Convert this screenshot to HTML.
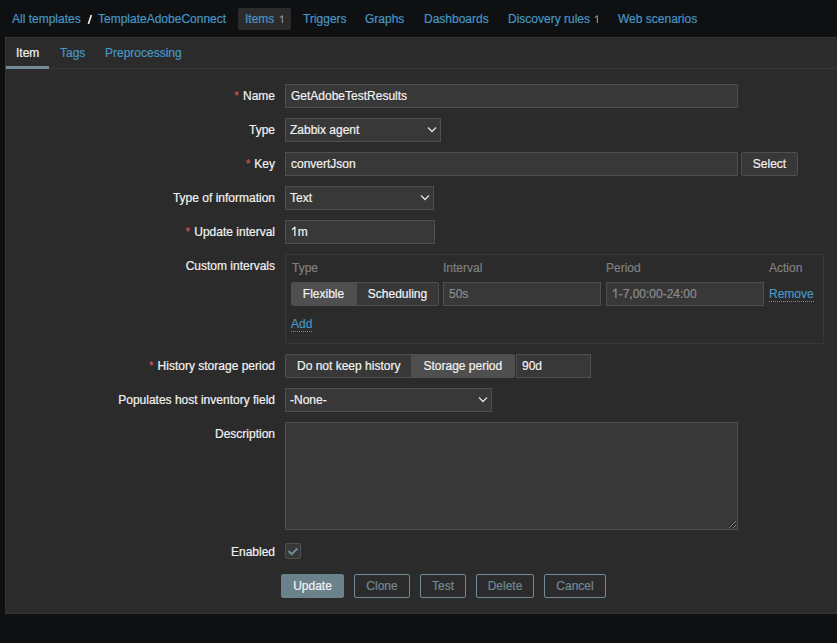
<!DOCTYPE html>
<html><head><meta charset="utf-8">
<style>
*{box-sizing:border-box;margin:0;padding:0}
html,body{width:837px;height:643px;overflow:hidden;background:#0e1012;font-family:"Liberation Sans",sans-serif;font-size:12px;color:#f2f2f2;-webkit-text-stroke:0.2px currentColor}
.a{position:absolute;white-space:nowrap;line-height:14px}
.lnk{color:#4796c4}
.one{position:absolute;left:0;top:0}
#hdr-items{position:absolute;left:238px;top:8px;width:53px;height:22px;background:#2b2b2b;border-radius:2px}
#box{position:absolute;left:5px;top:37px;width:900px;height:577px;background:#2b2b2b;border:1px solid #333}
#sep{position:absolute;left:6px;top:68px;width:900px;height:1px;background:#383838}
#uline{position:absolute;left:6px;top:66px;width:43px;height:3px;background:#768d99}
.lbl{position:absolute;text-align:right;right:562px;white-space:nowrap;line-height:14px}
.req::before{content:"*";color:#e45959;margin-right:4px;-webkit-text-stroke:0}
.inp{position:absolute;height:24px;background:#383838;border:1px solid #4f4f4f;padding:0 5px;line-height:22px;white-space:nowrap}
.sel{padding-left:4px}
.chev{position:absolute;right:3px;top:7px}
.btn{position:absolute;height:24px;border:1px solid #4f4f4f;border-radius:2px;background:#383838;text-align:center;line-height:22px}
.alt{position:absolute;top:574px;height:24px;border:1px solid #708995;border-radius:2px;color:#708995;text-align:center;line-height:22px}
.th{position:absolute;color:#808080;line-height:14px}
.ph{color:#8c8c8c}
.rad{position:absolute;height:24px;border:1px solid #4f4f4f;border-radius:2px;background:#383838;overflow:hidden}
.rad span{position:absolute;top:0;height:22px;line-height:22px;text-align:center}
.rad .on{background:#4f4f4f}
.act{border-bottom:1px dotted #4796c4}
</style></head><body>
<div class="a lnk" style="left:12px;top:12px">All templates</div>
<svg style="position:absolute;left:85px;top:12px" width="10" height="15"><path d="M3.4 11.9L6.3 3" stroke="#f2f2f2" stroke-width="1.6"/></svg>
<div class="a lnk" style="left:98px;top:12px">TemplateAdobeConnect</div>
<div id="hdr-items"></div>
<div class="a lnk" style="left:245px;top:12px">Items</div><div class="a" style="left:278.5px;top:14.5px"><svg class="one" width="5" height="9"><path d="M3.4 0.5V8M0.8 2.6Q2.6 1.6 3.4 0.5" stroke="#8c8c8c" stroke-width="1.2" fill="none"/></svg></div>
<div class="a lnk" style="left:303px;top:12px">Triggers</div>
<div class="a lnk" style="left:365px;top:12px">Graphs</div>
<div class="a lnk" style="left:424px;top:12px">Dashboards</div>
<div class="a lnk" style="left:508px;top:12px">Discovery rules</div><div class="a" style="left:593.5px;top:14.5px"><svg class="one" width="5" height="9"><path d="M3.4 0.5V8M0.8 2.6Q2.6 1.6 3.4 0.5" stroke="#8c8c8c" stroke-width="1.2" fill="none"/></svg></div>
<div class="a lnk" style="left:618px;top:12px">Web scenarios</div>

<div id="box"></div>
<div id="sep"></div>
<div id="uline"></div>
<div class="a" style="left:16px;top:46px">Item</div>
<div class="a lnk" style="left:60px;top:46px">Tags</div>
<div class="a lnk" style="left:105px;top:46px">Preprocessing</div>

<div class="lbl req" style="top:89px">Name</div>
<div class="inp" style="left:285px;top:84px;width:453px">GetAdobeTestResults</div>

<div class="lbl" style="top:123px">Type</div>
<div class="inp sel" style="left:285px;top:118px;width:156px">Zabbix agent<svg class="chev" width="10" height="7"><path d="M1 1.5L5 5.5L9 1.5" stroke="#e0e0e0" fill="none" stroke-width="1.3"/></svg></div>

<div class="lbl req" style="top:157px">Key</div>
<div class="inp" style="left:285px;top:152px;width:453px">convertJson</div>
<div class="btn" style="left:741px;top:152px;width:57px">Select</div>

<div class="lbl" style="top:191px">Type of information</div>
<div class="inp sel" style="left:285px;top:186px;width:149px">Text<svg class="chev" width="10" height="7"><path d="M1 1.5L5 5.5L9 1.5" stroke="#e0e0e0" fill="none" stroke-width="1.3"/></svg></div>

<div class="lbl req" style="top:225px">Update interval</div>
<div class="inp" style="left:285px;top:220px;width:150px"><svg width="6.67" height="10" style="vertical-align:baseline"><path d="M3.9 0.8V10M0.9 3.6Q2.9 2.6 3.9 0.8" stroke="#f2f2f2" stroke-width="1.3" fill="none"/></svg>m</div>

<div class="lbl" style="top:259px">Custom intervals</div>
<div class="a" style="left:285px;top:254px;width:539px;height:90px;border:1px solid #383838"></div>
<div class="th" style="left:292px;top:261px">Type</div>
<div class="th" style="left:443px;top:261px">Interval</div>
<div class="th" style="left:606px;top:261px">Period</div>
<div class="th" style="left:769px;top:261px">Action</div>
<div class="rad" style="left:291px;top:282px;width:148px"><span class="on" style="left:0;width:65px;padding-right:2px">Flexible</span><span style="left:65px;width:81px">Scheduling</span></div>
<div class="inp" style="left:443px;top:282px;width:158px"><span class="ph">50s</span></div>
<div class="inp" style="left:606px;top:282px;width:158px"><span class="ph"><svg width="6.67" height="10" style="vertical-align:baseline"><path d="M3.9 0.8V10M0.9 3.6Q2.9 2.6 3.9 0.8" stroke="#8c8c8c" stroke-width="1.3" fill="none"/></svg>-7,00:00-24:00</span></div>
<div class="a lnk" style="left:769px;top:287px"><span class="act">Remove</span></div>
<div class="a lnk" style="left:291px;top:317px"><span class="act">Add</span></div>

<div class="lbl req" style="top:359px">History storage period</div>
<div class="rad" style="left:285px;top:354px;width:230px"><span style="left:0;width:125px;text-align:left;padding-left:11px">Do not keep history</span><span class="on" style="left:125px;width:103px;text-align:left;padding-left:12.5px">Storage period</span></div>
<div class="inp" style="left:516px;top:354px;width:75px">90d</div>

<div class="lbl" style="top:393px">Populates host inventory field</div>
<div class="inp sel" style="left:285px;top:388px;width:207px">-None-<svg class="chev" width="10" height="7"><path d="M1 1.5L5 5.5L9 1.5" stroke="#e0e0e0" fill="none" stroke-width="1.3"/></svg></div>
<div class="lbl" style="top:427px">Description</div>
<div class="inp" style="left:285px;top:422px;width:453px;height:108px"><svg style="position:absolute;right:0;bottom:0" width="10" height="10"><path d="M2.5 8.5L9 2M6.5 8.5L9 6" stroke="#1e1e1e" stroke-width="2.2"/><path d="M2.5 8.5L9 2M6.5 8.5L9 6" stroke="#e8e8e8" stroke-width="1" stroke-dasharray="1.1 0.4"/></svg></div>
<div class="lbl" style="top:545px">Enabled</div>
<div class="a" style="left:285px;top:543px;width:16px;height:16px;background:#383838;border:1px solid #4f4f4f;border-radius:2px"><svg width="14" height="14" style="position:absolute;left:0;top:0"><path d="M2.5 7L5.7 10.2L11.4 4.5" stroke="#718a96" stroke-width="2" fill="none"/></svg></div>

<div class="btn" style="left:281px;top:574px;width:63px;background:#6b818c;border-color:#6b818c">Update</div>
<div class="alt" style="left:354px;width:56px">Clone</div>
<div class="alt" style="left:420px;width:46px">Test</div>
<div class="alt" style="left:476px;width:58px">Delete</div>
<div class="alt" style="left:544px;width:62px">Cancel</div>
</body></html>
